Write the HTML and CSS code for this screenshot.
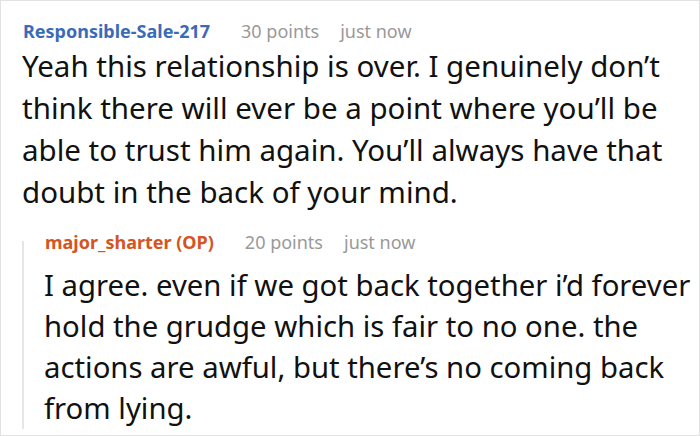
FILE: index.html
```html
<!DOCTYPE html>
<html>
<head>
<meta charset="utf-8">
<link rel="stylesheet" href="styles.css">
</head>
<body>
<div class="thread">
  <div class="comment">
    <div class="meta">
      <span class="user user-blue">Responsible-Sale-217</span>
      <span class="info">30 points</span>
      <span class="info">just now</span>
    </div>
    <p class="text">Yeah this relationship is over. I genuinely don’t think there will ever be a point where you’ll be able to trust him again. You’ll always have that doubt in the back of your mind.</p>
  </div>
  <div class="reply">
    <div class="rule"></div>
    <div class="reply-body">
      <div class="meta">
        <span class="user user-orange">major_sharter (OP)</span>
        <span class="info">20 points</span>
        <span class="info">just now</span>
      </div>
      <p class="text text-reply">I agree. even if we got back together i’d forever hold the grudge which is fair to no one. the actions are awful, but there’s no coming back from lying.</p>
    </div>
  </div>
</div>
</body>
</html>
```
FILE: styles.css
```css
html, body {
  margin: 0;
  padding: 0;
  background: #fff;
}
.thread {
  width: 700px;
  height: 436px;
  box-sizing: border-box;
  border: 1px solid #e2e2e2;
  padding: 17px 1px 0 21px;
  font-family: "Noto Sans", sans-serif;
  overflow: hidden;
}
.meta {
  display: flex;
  gap: 21px;
  align-items: baseline;
  font-size: 18px;
  line-height: 26px;
  margin-left: 1px;
}
.user {
  font-weight: 700;
  margin-right: 10px;
}
.user-blue { color: #3b6bb7; }
.user-orange { color: #d5541f; }
.info { color: #999; }
.text {
  margin: 1px 0 0 0;
  font-size: 29.5px;
  line-height: 42px;
  color: #111;
}
.comment .text {
  margin-right: 5px;
}
.reply {
  display: flex;
  margin-top: 16px;
}
.rule {
  width: 2px;
  flex: none;
  margin-top: 12px;
  background: #e6e6e6;
}
.reply-body {
  flex: 1;
  padding-left: 20px;
}
.text-reply {
  margin-top: 10px;
  font-size: 29.3px;
  line-height: 41px;
}
```
